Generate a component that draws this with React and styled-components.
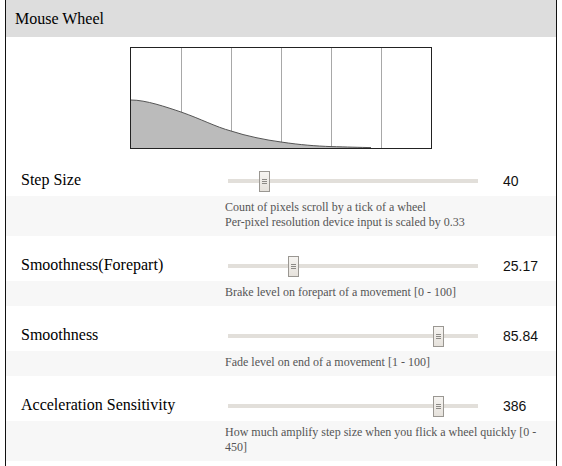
import React from "react";
import styled, { createGlobalStyle } from "styled-components";

const GlobalStyle = createGlobalStyle`
  html, body {
    margin: 0;
    padding: 0;
    background: #fff;
  }
  body {
    font-family: "Liberation Serif", "Times New Roman", serif;
  }
`;

const serif = `"Liberation Serif", "Times New Roman", serif`;

const Panel = styled.div`
  margin-left: 5px;
  width: 552px;
  box-sizing: border-box;
  border-left: 1px solid #111;
  border-right: 1px solid #111;
  min-height: 466px;
`;

const Header = styled.div`
  height: 37px;
  background: #dddddd;
  padding-left: 9px;
  display: flex;
  align-items: center;
  font-family: ${serif};
  font-size: 16px;
  color: #000;
`;

const ChartWrap = styled.div`
  display: flex;
  justify-content: center;
  padding-top: 10px;
  padding-bottom: 2px;
`;

const ChartBox = styled.div`
  width: 300px;
  height: 100px;
  border: 1px solid #222;
  background: #fff;
  line-height: 0;
`;

const Row = styled.div`
  display: grid;
  grid-template-columns: 204px 278px 1fr;
  align-items: center;
  padding: 12px 0 0 15px;
  height: 33px;
`;

const Label = styled.div`
  font-family: ${serif};
  font-size: 16px;
  color: #000;
  white-space: nowrap;
`;

const Track = styled.div`
  position: relative;
  margin-left: 3px;
  width: 250px;
  height: 4px;
  background: #e2dfda;
  margin-top: 3px;
`;

const Thumb = styled.div`
  position: absolute;
  top: -8px;
  width: 9px;
  height: 19px;
  border: 1px solid #9a9792;
  background: linear-gradient(#f6f4f1, #e6e2dc);

  &::after {
    content: "";
    position: absolute;
    left: 2px;
    top: 7px;
    width: 5px;
    height: 5px;
    background: repeating-linear-gradient(#8c8a86 0 1px, transparent 1px 2px);
  }
`;

const Value = styled.div`
  font-family: "Liberation Sans", Arial, sans-serif;
  font-size: 14px;
  color: #111;
  margin-top: 3px;
`;

const DescBand = styled.div`
  display: grid;
  grid-template-columns: 219px 1fr;
  background: #f7f7f7;
  padding: 4px 0 6px;
`;

const DescText = styled.div`
  grid-column: 2;
  padding-right: 14px;
  font-family: ${serif};
  font-size: 12px;
  line-height: 15px;
  color: #555;
`;

function WheelChart() {
  const grid = [50, 100, 150, 200, 250];
  const curve =
    "M0,52 C15,52 35,59 50,64 C70,71 85,79 100,83 C115,88 135,92 150,94 C170,97 185,98 200,98.6 C215,99 230,99.4 240,99.6";
  return (
    <svg width="300" height="100" viewBox="0 0 300 100">
      {grid.map((x) => (
        <line key={x} x1={x + 0.5} y1="0" x2={x + 0.5} y2="100" stroke="#a8a8a8" strokeWidth="1" />
      ))}
      <path d={`${curve} L240,100 L0,100 Z`} fill="#bbbbbb" />
      <path d={curve} fill="none" stroke="#555" strokeWidth="1" />
    </svg>
  );
}

const settings = [
  {
    id: "step",
    name: "Step Size",
    value: "40",
    pct: 0.13,
    desc: ["Count of pixels scroll by a tick of a wheel", "Per-pixel resolution device input is scaled by 0.33"],
  },
  {
    id: "fore",
    name: "Smoothness(Forepart)",
    value: "25.17",
    pct: 0.2517,
    desc: ["Brake level on forepart of a movement [0 - 100]"],
  },
  {
    id: "smooth",
    name: "Smoothness",
    value: "85.84",
    pct: 0.857,
    desc: ["Fade level on end of a movement [1 - 100]"],
  },
  {
    id: "accel",
    name: "Acceleration Sensitivity",
    value: "386",
    pct: 0.858,
    desc: ["How much amplify step size when you flick a wheel quickly [0 - 450]"],
  },
];

function SettingRow({ item }) {
  const left = Math.round(item.pct * 239);
  return (
    <>
      <Row>
        <Label>{item.name}</Label>
        <Track>
          <Thumb style={{ left: `${left}px` }} />
        </Track>
        <Value>{item.value}</Value>
      </Row>
      <DescBand>
        <DescText>
          {item.desc.map((line) => (
            <div key={line}>{line}</div>
          ))}
        </DescText>
      </DescBand>
    </>
  );
}

export default function App() {
  return (
    <>
      <GlobalStyle />
      <Panel>
        <Header>Mouse Wheel</Header>
        <ChartWrap>
          <ChartBox>
            <WheelChart />
          </ChartBox>
        </ChartWrap>
        {settings.map((item) => (
          <SettingRow key={item.id} item={item} />
        ))}
      </Panel>
    </>
  );
}
